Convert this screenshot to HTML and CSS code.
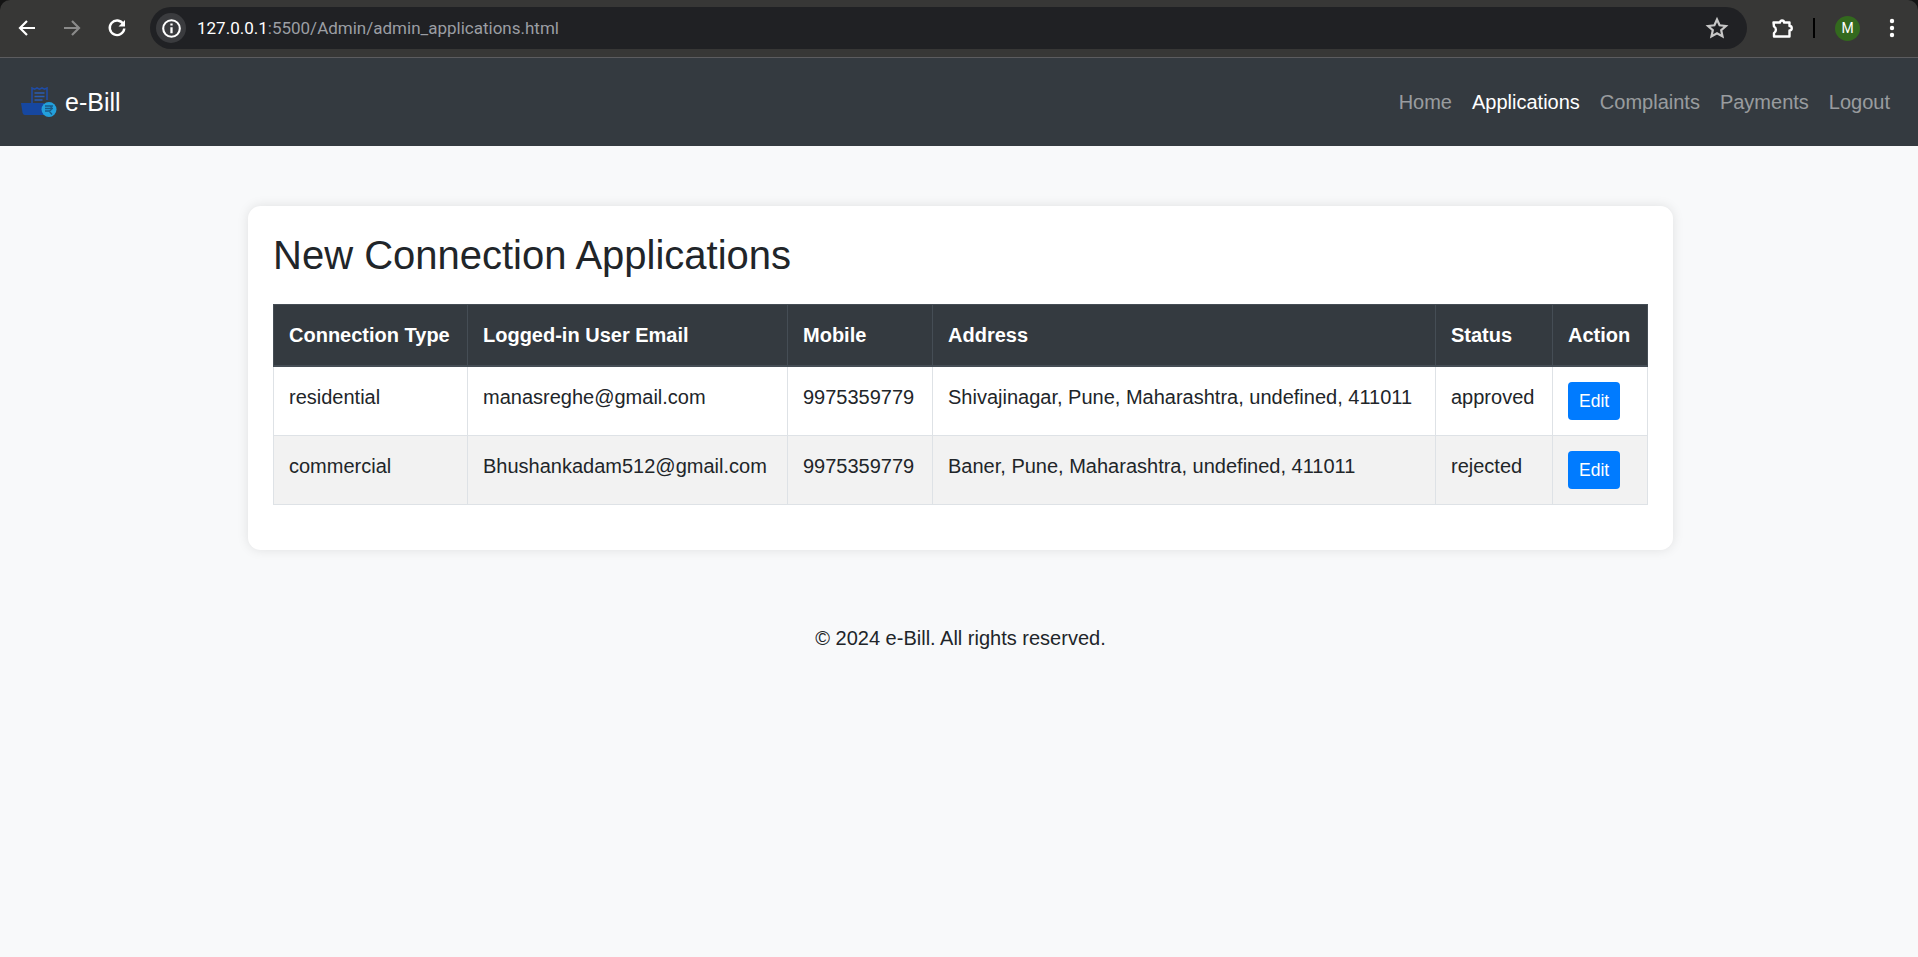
FILE: index.html
```html
<!DOCTYPE html>
<html>
<head>
    <title>Admin Applications</title>
    <link rel="stylesheet" href="styles.css">
</head>
<body>
    <div class="browser-frame">
        <div class="browser-bar">
            <div class="browser-nav">
                <svg class="tool-icon" viewBox="0 0 24 24"><path d="M20 12H5.500M12 5l-7 7 7 7" fill="none" stroke="#fff" stroke-width="2.200"/></svg>
                <svg class="tool-icon" viewBox="0 0 24 24"><path d="M4 12h14.500M12 5l7 7-7 7" fill="none" stroke="#8a8a8a" stroke-width="2.200"/></svg>
                <svg class="tool-icon" viewBox="0 0 24 24"><path d="M18.300 8A7.300 7.300 0 1 0 19.300 12.500" fill="none" stroke="#fff" stroke-width="2.400"/><path d="M20 4v6.500h-6.500z" fill="#fff"/></svg>
            </div>
            <div class="address-bar">
                <span class="site-info">
                    <svg viewBox="0 0 24 24" width="21" height="21"><circle cx="12" cy="12" r="9.500" fill="none" stroke="#fff" stroke-width="2.400"/><path d="M12 10.500v7M12 6.300v2.400" stroke="#fff" stroke-width="2.600"/></svg>
                </span>
                <span class="url"><span class="url-host">127.0.0.1</span>:5500/Admin/admin_applications.html</span>
                <svg class="star" viewBox="0 0 24 24" width="24" height="24"><path d="M12 3.500l2.600 5.800 6.300.7-4.700 4.200 1.300 6.200-5.500-3.200-5.500 3.200 1.300-6.200L3.100 10l6.300-.7z" fill="none" stroke="#c7c7c7" stroke-width="2.200"/></svg>
            </div>
            <div class="browser-tools">
                <svg class="puzzle" viewBox="0 0 24 24" width="24" height="24"><path d="M3.500 6.500H10a2 2 0 0 1 4 0h5.500V10a2 2 0 0 1 0 4.500v6H4v-3.500a3 3.500 0 0 0 0-6.500z" fill="none" stroke="#fff" stroke-width="2.400" stroke-linejoin="round"/></svg>
                <span class="tool-divider"></span>
                <span class="avatar">M</span>
                <svg class="dots" viewBox="0 0 6 24" width="6" height="24"><circle cx="3" cy="5" r="2.200" fill="#fff"/><circle cx="3" cy="12" r="2.200" fill="#fff"/><circle cx="3" cy="19" r="2.200" fill="#fff"/></svg>
            </div>
        </div>
    </div>

    <nav class="navbar">
        <a class="brand" href="#">
            <svg class="brand-logo" viewBox="0 0 36 30">
                <path d="M11 17V1l2.500 1.200L16 1l2.500 1.200L21 1l2.500 1.200L26 1v12" fill="none" stroke="#1f4ba3" stroke-width="1.600"/>
                <path d="M13.500 6h10M13.500 9.500h10M13.500 13h8" stroke="#2a5cb0" stroke-width="1.300"/>
                <path d="M0 16h23v12H4C2.500 28 1.800 27 1.500 25.500z" fill="#1647a0"/>
                <circle cx="28" cy="22.500" r="7.500" fill="#23a0dc"/>
                <path d="M24 19h8M24 21.500h8M24 24h5M29 19c2.500 1.500 1.500 5-1 5l3 3.500" fill="none" stroke="#1b5a86" stroke-width="1.300"/>
            </svg>
            e-Bill
        </a>
        <ul class="nav-links">
            <li><a href="#">Home</a></li>
            <li><a class="active" href="#">Applications</a></li>
            <li><a href="#">Complaints</a></li>
            <li><a href="#">Payments</a></li>
            <li><a href="#">Logout</a></li>
        </ul>
    </nav>

    <div class="page">
        <div class="card">
            <h2>New Connection Applications</h2>
            <table>
                <thead>
                    <tr>
                        <th class="col-type">Connection Type</th>
                        <th class="col-email">Logged-in User Email</th>
                        <th class="col-mobile">Mobile</th>
                        <th class="col-address">Address</th>
                        <th class="col-status">Status</th>
                        <th>Action</th>
                    </tr>
                </thead>
                <tbody>
                    <tr>
                        <td>residential</td>
                        <td>manasreghe@gmail.com</td>
                        <td>9975359779</td>
                        <td>Shivajinagar, Pune, Maharashtra, undefined, 411011</td>
                        <td>approved</td>
                        <td><button type="button">Edit</button></td>
                    </tr>
                    <tr>
                        <td>commercial</td>
                        <td>Bhushankadam512@gmail.com</td>
                        <td>9975359779</td>
                        <td>Baner, Pune, Maharashtra, undefined, 411011</td>
                        <td>rejected</td>
                        <td><button type="button">Edit</button></td>
                    </tr>
                </tbody>
            </table>
        </div>
        <footer>© 2024 e-Bill. All rights reserved.</footer>
    </div>
</body>
</html>
```

FILE: styles.css
```css
*{
    box-sizing: border-box;
}
html, body{
    height: 100%;
}
body{
    margin: 0;
    background-color: #f8f9fa;
    color: #212529;
    font-family: "Liberation Sans", Arial, sans-serif;
    font-size: 20px;
    line-height: 30px;
    overflow: hidden;
}

/* browser toolbar */
.browser-frame{
    background-color: #141414;
}
.browser-bar{
    display: flex;
    align-items: center;
    height: 58px;
    padding: 0 0 1px 15px;
    background-color: #373736;
    border-bottom: 1px solid #5c5c5f;
    border-radius: 10px 10px 0 0;
}
.browser-nav{
    display: flex;
    gap: 21px;
    width: 135px;
}
.tool-icon{
    width: 24px;
    height: 24px;
}
.address-bar{
    display: flex;
    align-items: center;
    width: 1597px;
    height: 42px;
    padding: 0 18px 0 6px;
    border-radius: 21px;
    background-color: #202124;
}
.site-info{
    display: flex;
    align-items: center;
    justify-content: center;
    width: 30px;
    height: 30px;
    margin-right: 11px;
    border-radius: 50%;
    background-color: #3a3b3e;
}
.url{
    flex: 1;
    font-family: Roboto, "Liberation Sans", sans-serif;
    font-size: 17px;
    color: #9b9ea3;
}
.url-host{
    color: #fff;
}
.browser-tools{
    display: flex;
    align-items: center;
    margin-left: 23px;
}
.tool-divider{
    width: 2px;
    height: 20px;
    margin: 0 20px 0 19px;
    background-color: #000;
}
.avatar{
    display: flex;
    align-items: center;
    justify-content: center;
    width: 25px;
    height: 25px;
    border-radius: 50%;
    background-color: #33691e;
    color: #fff;
    font-family: Roboto, sans-serif;
    font-size: 14px;
}
.dots{
    margin-left: 29px;
}

/* site navbar */
.navbar{
    display: flex;
    align-items: center;
    justify-content: space-between;
    height: 88px;
    padding: 0 18px 0 21px;
    background-color: #343a40;
}
.brand{
    display: flex;
    align-items: center;
    gap: 8px;
    color: #fff;
    font-size: 25px;
    text-decoration: none;
}
.brand-logo{
    width: 36px;
    height: 30px;
}
.nav-links{
    display: flex;
    margin: 0;
    padding: 0;
    list-style: none;
}
.nav-links a{
    display: block;
    padding: 10px;
    color: rgba(255, 255, 255, 0.5);
    text-decoration: none;
}
.nav-links a.active{
    color: #fff;
}

/* content */
.page{
    padding-left: 3px;
}
.card{
    width: 1425px;
    margin: 60px auto 0;
    padding: 25px;
    border-radius: 12.500px;
    background-color: #fff;
    box-shadow: 0 0 12px rgba(0, 0, 0, 0.1);
}
h2{
    margin: 0 0 25px;
    font-size: 40px;
    font-weight: 400;
    line-height: 48px;
}
table{
    width: 100%;
    margin-bottom: 20px;
    border-collapse: collapse;
    table-layout: fixed;
}
th, td{
    padding: 15px;
    text-align: left;
    vertical-align: top;
    border: 1px solid #dee2e6;
}
th{
    background-color: #343a40;
    border-color: #454d55;
    border-bottom-width: 2px;
    color: #fff;
}
.col-type{
    width: 194px;
}
.col-email{
    width: 320px;
}
.col-mobile{
    width: 145px;
}
.col-address{
    width: 503px;
}
.col-status{
    width: 117px;
}
tbody tr:nth-child(even){
    background-color: #f2f2f2;
}
button{
    height: 38px;
    padding: 0 11px;
    border: none;
    border-radius: 4px;
    color: #fff;
    background-color: #007bff;
    font-family: inherit;
    font-size: 17.500px;
}
footer{
    margin-top: 73px;
    text-align: center;
}
```
